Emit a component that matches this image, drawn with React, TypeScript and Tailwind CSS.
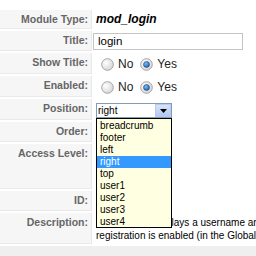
import React from 'react';

const Radio: React.FC<{ checked?: boolean }> = ({ checked }) => (
  <svg width="13" height="13" viewBox="0 0 13 13" className="shrink-0">
    <defs>
      <radialGradient id={checked ? 'rg1' : 'rg0'} cx="0.35" cy="0.35" r="0.8">
        <stop offset="0" stopColor="#ffffff" />
        <stop offset="1" stopColor="#d0d0d0" />
      </radialGradient>
      <radialGradient id="dot" cx="0.4" cy="0.35" r="0.7">
        <stop offset="0" stopColor="#7fc0f5" />
        <stop offset="1" stopColor="#1258a8" />
      </radialGradient>
    </defs>
    <circle cx="6.5" cy="6.5" r="5.8" fill={`url(#${checked ? 'rg1' : 'rg0'})`} stroke="#a4a4a4" strokeWidth="1" />
    {checked && <circle cx="6.5" cy="6.5" r="3" fill="url(#dot)" stroke="#2a4f80" strokeWidth="0.6" />}
  </svg>
);

const Row: React.FC<{ label: string; h: string; children?: React.ReactNode }> = ({ label, h, children }) => (
  <div className={`flex gap-[1px] ${h}`}>
    <div className="w-[92px] shrink-0 bg-[#f6f6f6] border-b border-r border-[#e9e9e9] text-right pr-[3px] pt-[3px] text-[10.5px] leading-[13px] font-bold text-[#666666]">
      {label}
    </div>
    <div className="relative flex-1">{children}</div>
  </div>
);

const YesNo: React.FC = () => (
  <div className="flex items-center pt-[4px] pl-[8px] text-[12px] leading-[14px] text-[#222]">
    <Radio />
    <span className="ml-[4px]">No</span>
    <span className="ml-[7px]"><Radio checked /></span>
    <span className="ml-[4px]">Yes</span>
  </div>
);

const positions = ['breadcrumb', 'footer', 'left', 'right', 'top', 'user1', 'user2', 'user3', 'user4'];

export default function App() {
  return (
    <div className="relative w-[256px] h-[256px] overflow-hidden bg-white font-['Liberation_Sans',Arial,sans-serif]">
      <div className="pt-[10px] flex flex-col gap-[2px]">
        <Row label="Module Type:" h="h-[19px]">
          <div className="pl-[3px] pt-[1px] text-[12px] leading-[16px] font-bold italic text-black">mod_login</div>
        </Row>
        <Row label="Title:" h="h-[20px]">
          <div className="mt-[2px] w-[150px] h-[17px] border border-[#c4c4c4] bg-white pl-[4px] text-[11.5px] leading-[15px] text-black">
            login
          </div>
        </Row>
        <Row label="Show Title:" h="h-[21px]">
          <YesNo />
        </Row>
        <Row label="Enabled:" h="h-[21px]">
          <YesNo />
        </Row>
        <Row label="Position:" h="h-[21px]">
          <div className="ml-[3px] mt-[4px] flex w-[76px] h-[15px] border border-[#7f9db9] bg-white">
            <div className="flex-1 pl-[1px] text-[10px] leading-[13px] text-black">right</div>
            <div className="w-[16px] h-full border border-[#b9c9ef] bg-gradient-to-b from-[#d8e4fa] to-[#b4c8f2] flex items-center justify-center">
              <svg width="7" height="4" viewBox="0 0 7 4">
                <path d="M0 0h7L3.5 4z" fill="#000" />
              </svg>
            </div>
          </div>
          <div className="absolute z-10 left-[3px] top-[19px] w-[76px] h-[110px] border border-[#000] bg-[#ffffe1] pt-[1px]">
            {positions.map((p) => (
              <div
                key={p}
                className={
                  p === 'right'
                    ? 'h-[12px] pl-[3px] text-[10px] leading-[12px] bg-[#3399ff] text-white'
                    : 'h-[12px] pl-[3px] text-[10px] leading-[12px] text-black'
                }
              >
                {p}
              </div>
            ))}
          </div>
        </Row>
        <Row label="Order:" h="h-[20px]" />
        <Row label="Access Level:" h="h-[45px]" />
        <Row label="ID:" h="h-[20px]" />
        <Row label="Description:" h="h-[31px]">
          <div className="pl-[3px] pt-[3px] text-[10px] leading-[13px] text-black whitespace-nowrap">
            This Module displays a username and password login form. It also displays a link to
            <br />
            registration is enabled (in the Global Configuration settings), another link will be shown
          </div>
        </Row>
      </div>
      <div className="mt-[2px] h-[12px] bg-[#efefef]" />
    </div>
  );
}
